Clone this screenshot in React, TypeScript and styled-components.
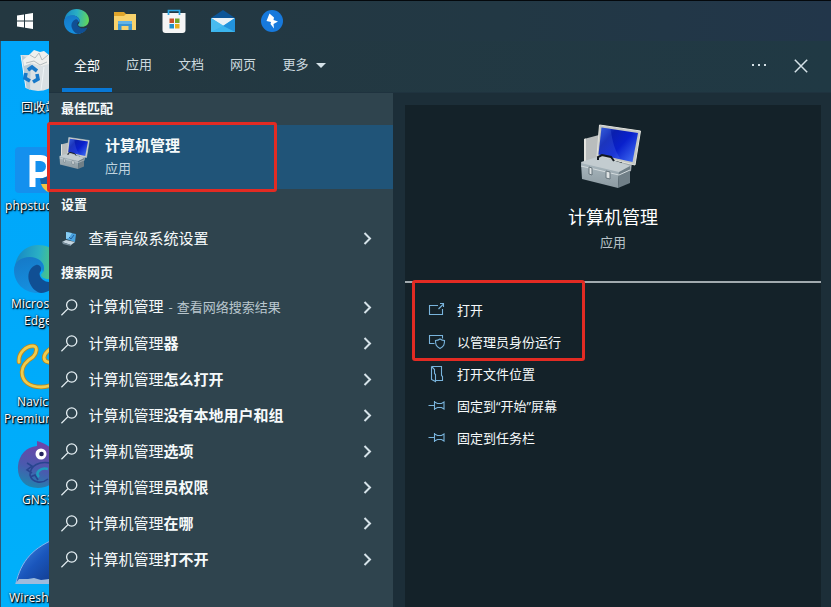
import React from 'react';
import styled, { createGlobalStyle } from 'styled-components';

const GlobalStyle = createGlobalStyle`
  * { box-sizing: border-box; }
  html, body, #root { margin: 0; height: 100%; }
  body {
    overflow: hidden;
    background: #223641;
    color: #f6fafb;
    font-family: "Open Sans", "Noto Sans CJK SC", sans-serif;
    font-size: 13px;
  }
  svg { display: block; flex: none; }
`;

const Screen = styled.div`
  position: relative;
  width: 831px;
  height: 607px;
  display: flex;
  flex-direction: column;
  overflow: hidden;
`;

const Taskbar = styled.div`
  height: 41px;
  flex: none;
  display: flex;
  align-items: center;
  gap: 25px;
  padding: 0 0 0 15px;
  border-top: 1px solid #04080c;
  background: linear-gradient(90deg, #243841, #223844 60%, #22364a);
`;

const TaskIcon = styled.div<{ $nudge?: number }>`
  width: 24px;
  height: 24px;
  display: flex;
  align-items: center;
  justify-content: center;
  margin-left: ${(p) => p.$nudge ?? 0}px;
`;

const Body = styled.div`
  flex: 1;
  min-height: 0;
  display: flex;
`;

const Desktop = styled.div`
  width: 49px;
  flex: none;
  overflow: hidden;
  border-left: 1px solid #31566f;
  background: linear-gradient(180deg, #00a6fb 0%, #00a9fa 45%, #00b0fa 100%);
`;

const Shortcut = styled.div`
  width: 98px;
  height: 98px;
  display: flex;
  flex-direction: column;
`;

const ShortcutArt = styled.div`
  height: 58px;
  flex: none;
  padding: 8px 0 0 13px;
`;

const Label = styled.span<{ $indent: number }>`
  display: block;
  padding-left: ${(p) => p.$indent}px;
  font-size: 12px;
  line-height: 17px;
  letter-spacing: 0.15px;
  color: #fff;
  white-space: nowrap;
  text-shadow: 1px 1px 1px #000, 1px 1px 2px #012, 0 0 2px #024;
`;

const SearchWindow = styled.div`
  flex: 1;
  min-width: 0;
  display: flex;
  flex-direction: column;
  background: #1c2e38;
`;

const TabBar = styled.div`
  height: 52px;
  flex: none;
  display: flex;
  align-items: stretch;
  padding-left: 13px;
  gap: 2px;
  border-bottom: 1px solid #1f333f;
  background: linear-gradient(90deg, #243841, #203944);
`;

const Tab = styled.div<{ $active?: boolean; $wide?: boolean }>`
  width: ${(p) => (p.$wide ? 68 : 50)}px;
  display: flex;
  align-items: center;
  justify-content: center;
  gap: 7px;
  padding-bottom: ${(p) => (p.$active ? 0 : 2)}px;
  border-bottom: 4px solid ${(p) => (p.$active ? '#0878d6' : 'transparent')};
  color: ${(p) => (p.$active ? '#fff' : '#ccd9df')};
`;

const TabArrow = styled.svg`
  width: 10px;
  height: 5px;
  margin-top: 4px;
  fill: #d5e2e8;
`;

const WindowActions = styled.div`
  margin-left: auto;
  display: flex;
  align-items: center;
  gap: 27px;
  padding: 0 23px 2px 0;
`;

const Columns = styled.div`
  flex: 1;
  min-height: 0;
  display: flex;
`;

const Results = styled.div`
  width: 344px;
  flex: none;
  background: #2f444e;
`;

const GroupTitle = styled.div`
  height: 32px;
  display: flex;
  align-items: center;
  padding: 0 0 3px 12px;
  font-weight: 700;
`;

const BestMatch = styled.div`
  height: 64px;
  display: flex;
  align-items: center;
  gap: 14px;
  padding: 0 0 2px 10px;
  background: #205478;
`;

const BestIcon = styled.div`
  padding-bottom: 6px;
`;

const BestText = styled.div`
  display: flex;
  flex-direction: column;
`;

const BestName = styled.span`
  font-size: 15px;
  line-height: 23px;
  font-weight: 700;
`;

const BestKind = styled.span`
  line-height: 22px;
  color: #bfd3df;
`;

const ResultRow = styled.div`
  height: 36px;
  display: flex;
  align-items: center;
  padding: 0 21px 2px 12px;
  font-size: 15px;
`;

const RowIcon = styled.div`
  width: 28px;
  flex: none;
`;

const RowText = styled.span`
  flex: 1;
  margin-left: -0.5px;
  white-space: pre;
  line-height: 20px;
  padding-bottom: 1px;
`;

const Hint = styled.span`
  margin-left: 1px;
  font-size: 13px;
  word-spacing: 0.7px;
  color: #b9c6cd;
`;

const WebGroup = styled.div`
  padding-top: 1px;
`;

const Details = styled.div`
  flex: 1;
  margin: 12px 10px 0 12px;
  background: #142229;
`;

const Hero = styled.div`
  height: 178px;
  display: flex;
  flex-direction: column;
  align-items: center;
  padding-top: 19px;
  border-bottom: 2px solid #a1aaae;
`;

const HeroArt = styled.div`
  margin-right: 3px;
`;

const HeroName = styled.div`
  margin-top: 15px;
  font-size: 18px;
  line-height: 28px;
  color: #fff;
`;

const HeroKind = styled.div`
  margin-top: 1px;
  line-height: 20px;
  color: #b8c2c7;
`;

const Actions = styled.div`
  padding-top: 12px;
`;

const Action = styled.div`
  height: 32px;
  display: flex;
  align-items: center;
  gap: 11px;
  padding: 0 0 3px 23px;
`;

const Marker = styled.div<{ $x: number; $y: number; $w: number; $h: number }>`
  position: absolute;
  left: ${(p) => p.$x}px;
  top: ${(p) => p.$y}px;
  width: ${(p) => p.$w}px;
  height: ${(p) => p.$h}px;
  border: 3px solid #e22b23;
  border-radius: 3px;
`;

const EdgeLogo = ({ size, id }: { size: number; id: string }) => (
  <svg width={size} height={size} viewBox="0 0 48 48">
    <defs>
      <linearGradient id={id + 'a'} x1="0" y1="0.3" x2="1" y2="0.4">
        <stop offset="0" stopColor="#1687c4" />
        <stop offset="0.5" stopColor="#2aafc4" />
        <stop offset="1" stopColor="#62d65a" />
      </linearGradient>
      <linearGradient id={id + 'b'} x1="0" y1="0" x2="0.3" y2="1">
        <stop offset="0" stopColor="#1678c6" />
        <stop offset="1" stopColor="#1590e0" />
      </linearGradient>
    </defs>
    <path d="M1 22C2 9 12 0 24 0c14 0 24 10 24 21 0 8-6 13-13 13-5 0-8-2-8-4 0-1 3-3 3-7 0-6-6-10-13-10C9 13 4 17 1 22z" fill={`url(#${id}a)`} />
    <path d="M0 25c0-8 7-13 16-13 8 0 14 5 14 11 0 1 0 3-1 4-1-4-4-6-7-5-5 2-6 8-3 13 4 8 13 11 23 5-4 5-10 8-18 8C10 48 0 38 0 25z" fill={`url(#${id}b)`} />
    <path d="M22 20c-6 2-9 9-7 16 2 6 6 11 12 12 8-1 14-5 17-10 1-2 0-2-1-2-8 3-15 0-17-5-1-3 0-4 1-5 1-3-1-7-5-6z" fill="#104f94" />
  </svg>
);

const StartLogo = () => (
  <svg width="18" height="18" viewBox="0 0 18 18" fill="#fff">
    <path d="M1 3.6 8 2.5v6H1zM9 2.3l8-1.2v7.4H9zM1 9.5h7v6l-7-1zM9 9.5h8v7.4l-8-1.2z" />
  </svg>
);

const FolderLogo = () => (
  <svg width="24" height="24" viewBox="0 0 24 24">
    <path d="M1 3h10l2 2h10v15H1z" fill="#e0a52b" />
    <path d="M1 7h10l2-2h10v16H1z" fill="#f8d26c" />
    <path d="M5 13q0-1 1-1h12q1 0 1 1v8h-3.500v-4h-7v4H5z" fill="#3b94d2" />
    <path d="M5 13q0-1 1-1h12q1 0 1 1v2H5z" fill="#63b3e6" />
  </svg>
);

const StoreLogo = () => (
  <svg width="24" height="24" viewBox="0 0 24 24">
    <path d="M.5 4h23v17q0 3-3 3h-17q-3 0-3-3z" fill="#f5f5f5" />
    <path d="M6.500 6V1.500h11V6" fill="none" stroke="#29a7e5" strokeWidth="1.700" />
    <path d="M7.500 9.500H12V14H7.500z" fill="#c9502b" />
    <path d="M13 9.500h4.500V14H13z" fill="#73a528" />
    <path d="M7.500 15H12v4.500H7.500z" fill="#218fc8" />
    <path d="M13 15h4.500v4.500H13z" fill="#e8ae1c" />
  </svg>
);

const MailLogo = () => (
  <svg width="26" height="24" viewBox="0 0 26 24">
    <path d="M1 9 13 1l12 8v3H1z" fill="#0c5597" />
    <path d="M1 9h24L13 19z" fill="#e9f1f6" />
    <path d="M1 9v14h24V9L13 17z" fill="#31a9e6" />
    <path d="M1 9v14L14 17z" fill="#48bbef" />
    <path d="m25 9-12 8 12 6z" fill="#2292dc" />
    <path d="M1 23h24L13 17z" fill="#3bb5ee" />
  </svg>
);

const BoltLogo = () => (
  <svg width="22" height="22" viewBox="0 0 22 22">
    <circle cx="11" cy="11" r="11" fill="#1779dc" />
    <path d="M8.500 3.500 5.500 11l4.500 1-.5 2 3.500 4.500-.5-4.500 4.500-2.500-4.500-1.500.5-2.500z" fill="#fff" />
  </svg>
);

const RecycleBin = () => (
  <svg width="48" height="48" viewBox="0 0 48 48">
    <path d="M7 6 12 39q12 6 24 0l5-33z" fill="#d9e0e4" />
    <path d="m7 6 10 5-1 30-4-2z" fill="#b7cbd7" />
    <path d="m9 11 7-6 4-4 6 2 4-1 5 4 6 1-2 7-12 3-9-3-8 3z" fill="#eff0ee" />
    <path d="m16 6 5 3 4-5 3 7 6-5M12 14l8-2 6 4 7-3" stroke="#b4bcbf" fill="none" />
    <path d="m7 6 5 33M30 18l-3 23" stroke="#eef4f7" fill="none" />
    <g fill="none" stroke="#1678c9" strokeWidth="3.600">
      <path d="m14 21 4-3 5 4" />
      <path d="m12 24-1 5 5 3" />
      <path d="m23 25 1 5-5 3" />
    </g>
  </svg>
);

const PhpStudy = () => (
  <svg width="48" height="48" viewBox="0 0 48 48">
    <rect x="1" width="46" height="46" rx="4" fill="#1490ee" />
    <path d="M18.500 40V11h8a8.500 8.500 0 0 1 0 17h-8" fill="none" stroke="#fff" strokeWidth="6" />
    <path d="m26 32 10-3v17q-9-4-10-14z" fill="#1a5f9f" />
    <path d="M27 37h9v9q-7-3-9-9z" fill="#f5c343" />
  </svg>
);

const NAVICAT_LINE =
  'M5 19C4 10 12 3 19 3c5 0 4 7 0 11C14 17 8 22 8 29c0 10 8 15 19 15 10 0 19-5 19-13s-8-11-12-12c-5-1-6-7 2-13';

const Navicat = () => (
  <svg width="48" height="48" viewBox="0 0 48 48" fill="none" strokeLinecap="round">
    <path d={NAVICAT_LINE} stroke="#b78720" strokeWidth="4.500" />
    <path d={NAVICAT_LINE} stroke="#f0cc4c" strokeWidth="2.800" />
  </svg>
);

const Chameleon = () => (
  <svg width="48" height="48" viewBox="0 0 48 48">
    <defs>
      <linearGradient id="gns" x1="0.3" y1="0" x2="0" y2="1">
        <stop offset="0" stopColor="#6c45a8" />
        <stop offset="0.5" stopColor="#4a5aae" />
        <stop offset="1" stopColor="#158fae" />
      </linearGradient>
    </defs>
    <path d="M23 0c12 3 22 11 22 27-1 13-10 20-21 20C10 47 3 37 4 25 5 14 12 6 23 5z" fill="url(#gns)" />
    <path d="M36 22c-10-2-20 2-20 12 2 8 12 9 18 4M13 22l5 3-5 4 5 3M16 36l5-2 3 5" fill="none" stroke="#28458f" strokeWidth="1.600" />
    <path d="M34 28c-8-2-13 4-9 8" stroke="#1f9cc0" strokeWidth="2.500" fill="none" />
    <circle cx="27" cy="13" r="5.500" fill="#fff" />
    <circle cx="27.500" cy="13" r="2.300" fill="#23225c" />
  </svg>
);

const Shark = () => (
  <svg width="48" height="48" viewBox="0 0 48 48">
    <defs>
      <linearGradient id="fin" x1="0" y1="0" x2="1" y2="1">
        <stop offset="0" stopColor="#4b93ea" />
        <stop offset="0.5" stopColor="#1a56bc" />
        <stop offset="1" stopColor="#103583" />
      </linearGradient>
    </defs>
    <path d="M2 44C7 23 18 8 46-2c-6 13-5 30 1 46z" fill="url(#fin)" stroke="#83b6ee" />
    <path d="m1 45 4-5 9 0 6-1 7 2 8-1 13 3v2z" fill="#9dbbdc" />
  </svg>
);

const ComputerManagement = ({ size, id }: { size: number; id: string }) => (
  <svg width={size} height={size} viewBox="0 0 64 64">
    <defs>
      <linearGradient id={id + 's'} x1="0" y1="0" x2="1" y2="0.8">
        <stop offset="0" stopColor="#2b55d8" />
        <stop offset="0.3" stopColor="#0a1fae" />
        <stop offset="0.6" stopColor="#0920cc" />
        <stop offset="1" stopColor="#3c67ef" />
      </linearGradient>
      <linearGradient id={id + 'b'} x1="0" y1="0" x2="0" y2="1">
        <stop offset="0" stopColor="#a9b7be" />
        <stop offset="1" stopColor="#8c9aa1" />
      </linearGradient>
    </defs>
    <path d="m4 15 15-4v25L4 38z" fill="#b9bdbd" />
    <path d="m4 15 2-.5V37l-2 1z" fill="#e4e4df" />
    <path d="M42 38h10l-1 9-9 4z" fill="#a0a8ac" />
    <path d="m19.500 1 41 6-5.500 34-38-9z" fill="#c4c7c3" stroke="#e2e3de" />
    <path d="m21.500 3.500 36.500 5.500-5.500 29-34-7.500z" fill={`url(#${id}s)`} />
    <path d="m21.500 3.500 9 1.500c2 12 4 21 10 30l-22-4.500z" fill="#6f9bff" opacity=".18" />
    <path d="m1 38 19-6 31 10-12 7L2 41z" fill="#c3ccd0" />
    <path d="m1 39 38 9-1 16L2 55z" fill={`url(#${id}b)`} />
    <path d="m39 48 11-6v17l-12 5z" fill="#707f87" />
    <path d="m1 42 38 9 11-5" fill="none" stroke="#d3dbde" />
    <path d="M18 36v-3l4-2 9 2 3 4" fill="none" stroke="#111820" strokeWidth="2" />
    <path d="m9 43 3 1v7l-3-1zm17 4 4 1v7l-4-1z" fill="#dfe4e5" stroke="#67757c" />
  </svg>
);

const SystemIcon = () => (
  <svg width="17" height="17" viewBox="0 0 17 17">
    <path d="m5 2 10 2-1 8-9-3z" fill="#4aa3df" />
    <path d="m5 2 6 1-3 5-3 1z" fill="#87cdf3" />
    <path d="m1 12 4-2 9 2-4 3z" fill="#c5d5df" />
    <path d="m1 12 9 3v1l-8-2z" fill="#788f9d" />
    <path d="m8 7 2 2 3-4" fill="none" stroke="#245f9e" />
  </svg>
);

const SearchIcon = () => (
  <svg width="17" height="17" viewBox="0 0 17 17" fill="none" stroke="#e5eff3" strokeWidth="1.300">
    <circle cx="10.700" cy="6" r="5.100" />
    <path d="M7 9.600.4 16.200" />
  </svg>
);

const Chevron = () => (
  <svg width="9" height="13" viewBox="0 0 9 13" fill="none" stroke="#d5e2e8" strokeWidth="2">
    <path d="m1.500 1 5.500 5.500L1.500 12" />
  </svg>
);

const ActionSvg = styled.svg`
  width: 18px;
  height: 18px;
  fill: none;
  stroke: #79b4dc;
  stroke-width: 1.1;
`;

const OpenIcon = () => (
  <ActionSvg viewBox="0 0 18 18">
    <path d="M10 4.500H1.500v9h13V8M10.500 8 15 3.500M12 2.500h3.500V6" />
  </ActionSvg>
);
const AdminIcon = () => (
  <ActionSvg viewBox="0 0 18 18">
    <path d="M6.500 10.500h-5v-8h13v3M12 6q2 1.500 4.500 1.500c0 4-.5 6-4.500 8-4-2-4.500-4-4.500-8Q10 7.500 12 6z" />
  </ActionSvg>
);
const LocationIcon = () => (
  <ActionSvg viewBox="0 0 18 18">
    <path d="M3.500 1.500h10v9l1 1v4h-7M3.500 1.500v13l4 2v-7l-1-1v-4l-3-3" />
  </ActionSvg>
);
const PinIcon = () => (
  <ActionSvg viewBox="0 0 18 18">
    <path d="M.5 8.500h6M6.500 4v9M6.500 5l3 1.500h4L16 5v7l-2.500-1.500h-4l-3 1.500" />
  </ActionSvg>
);

const shortcuts = [
  { art: <RecycleBin />, lines: [{ text: '回收站', indent: 20 }] },
  { art: <PhpStudy />, lines: [{ text: 'phpstudy', indent: 4 }] },
  { art: <EdgeLogo size={48} id="desk" />, lines: [{ text: 'Microsoft', indent: 10 }, { text: 'Edge', indent: 23 }] },
  { art: <Navicat />, lines: [{ text: 'Navicat', indent: 16 }, { text: 'Premium', indent: 3 }] },
  { art: <Chameleon />, lines: [{ text: 'GNS3', indent: 21 }] },
  { art: <Shark />, lines: [{ text: 'Wireshark', indent: 8 }] },
];

const suggestions = ['器', '怎么打开', '没有本地用户和组', '选项', '员权限', '在哪', '打不开'];

const actions = [
  { icon: <OpenIcon />, text: '打开' },
  { icon: <AdminIcon />, text: '以管理员身份运行' },
  { icon: <LocationIcon />, text: '打开文件位置' },
  { icon: <PinIcon />, text: '固定到“开始”屏幕' },
  { icon: <PinIcon />, text: '固定到任务栏' },
];

export default function App() {
  return (
    <>
      <GlobalStyle />
      <Screen>
        <Taskbar>
          <TaskIcon $nudge={-2}><StartLogo /></TaskIcon>
          <TaskIcon $nudge={2}><EdgeLogo size={25} id="bar" /></TaskIcon>
          <TaskIcon><FolderLogo /></TaskIcon>
          <TaskIcon><StoreLogo /></TaskIcon>
          <TaskIcon><MailLogo /></TaskIcon>
          <TaskIcon><BoltLogo /></TaskIcon>
        </Taskbar>
        <Body>
          <Desktop>
            {shortcuts.map((s, i) => (
              <Shortcut key={i}>
                <ShortcutArt>{s.art}</ShortcutArt>
                {s.lines.map((l) => (
                  <Label key={l.text} $indent={l.indent}>{l.text}</Label>
                ))}
              </Shortcut>
            ))}
          </Desktop>
          <SearchWindow>
            <TabBar>
              <Tab $active>全部</Tab>
              <Tab>应用</Tab>
              <Tab>文档</Tab>
              <Tab>网页</Tab>
              <Tab $wide>
                更多
                <TabArrow viewBox="0 0 10 5"><path d="M0 0h10L5 5z" /></TabArrow>
              </Tab>
              <WindowActions>
                <svg width="15" height="3" viewBox="0 0 15 3" fill="#d5e2e8">
                  <path d="M0 0h2v2H0zM6 0h2v2H6zM12 0h2v2h-2z" />
                </svg>
                <svg width="14" height="14" viewBox="0 0 14 14" stroke="#d5e2e8" strokeWidth="1.500">
                  <path d="m.8.8 12.400 12.400M13.200.8.8 13.200" />
                </svg>
              </WindowActions>
            </TabBar>
            <Columns>
              <Results>
                <GroupTitle>最佳匹配</GroupTitle>
                <BestMatch>
                  <BestIcon><ComputerManagement size={32} id="s" /></BestIcon>
                  <BestText>
                    <BestName>计算机管理</BestName>
                    <BestKind>应用</BestKind>
                  </BestText>
                </BestMatch>
                <GroupTitle>设置</GroupTitle>
                <ResultRow>
                  <RowIcon><SystemIcon /></RowIcon>
                  <RowText>查看高级系统设置</RowText>
                  <Chevron />
                </ResultRow>
                <GroupTitle>搜索网页</GroupTitle>
                <WebGroup>
                  <ResultRow>
                    <RowIcon><SearchIcon /></RowIcon>
                    <RowText>计算机管理<Hint> - 查看网络搜索结果</Hint></RowText>
                    <Chevron />
                  </ResultRow>
                  {suggestions.map((s) => (
                    <ResultRow key={s}>
                      <RowIcon><SearchIcon /></RowIcon>
                      <RowText>计算机管理<b>{s}</b></RowText>
                      <Chevron />
                    </ResultRow>
                  ))}
                </WebGroup>
              </Results>
              <Details>
                <Hero>
                  <HeroArt><ComputerManagement size={64} id="l" /></HeroArt>
                  <HeroName>计算机管理</HeroName>
                  <HeroKind>应用</HeroKind>
                </Hero>
                <Actions>
                  {actions.map((a) => (
                    <Action key={a.text}>{a.icon}{a.text}</Action>
                  ))}
                </Actions>
              </Details>
            </Columns>
          </SearchWindow>
        </Body>
        <Marker $x={47} $y={122} $w={230} $h={70} />
        <Marker $x={412} $y={280} $w={173} $h={81} />
      </Screen>
    </>
  );
}
